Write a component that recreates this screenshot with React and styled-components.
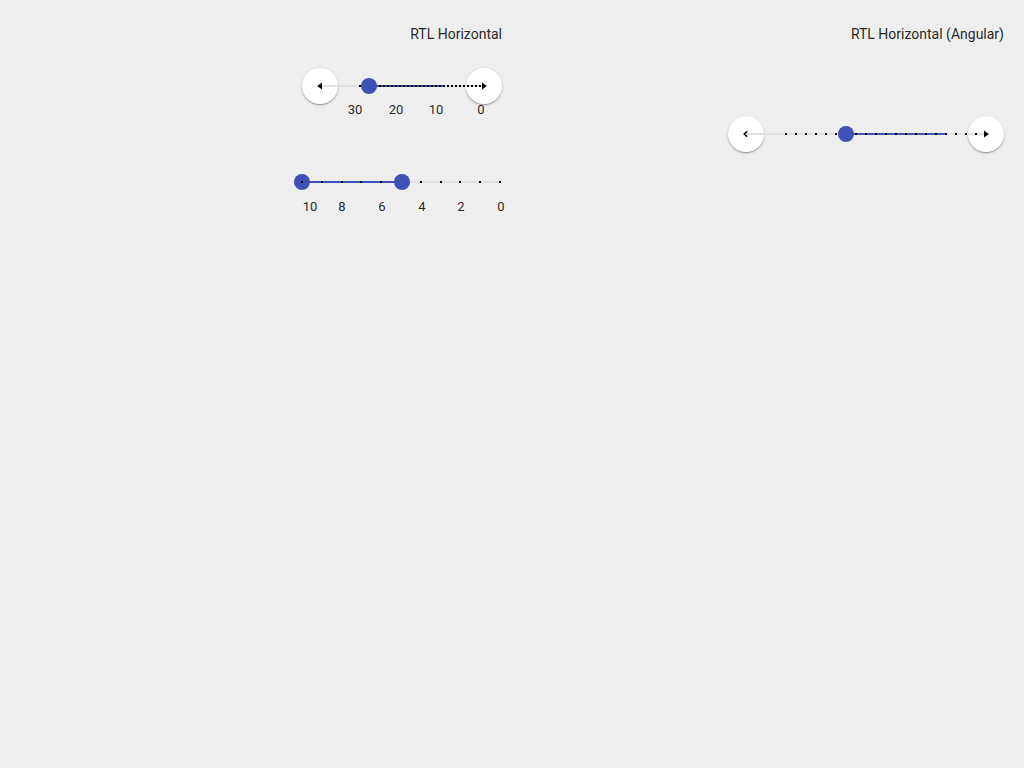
import React from 'react';
import styled, { createGlobalStyle } from 'styled-components';

const GlobalStyle = createGlobalStyle`
  html, body {
    margin: 0;
    padding: 0;
    background-color: #eeeeee;
    font-family: Roboto, "Liberation Sans", sans-serif;
    color: rgba(0, 0, 0, 0.87);
  }
`;

// Page grid with two columns
const Page = styled.div`
  display: grid;
  grid-template-columns: 1fr 1fr;
  column-gap: 20px;
  padding: 24px 20px 0;
  min-height: 768px;
  box-sizing: border-box;
`;

const Column = styled.div`
  display: flex;
  flex-direction: column;
  align-items: flex-end;
`;

const Title = styled.div`
  font-size: 14px;
  line-height: 20px;
`;

const SliderRow = styled.div`
  display: flex;
  align-items: center;
  width: ${props => props.width}px;
  height: 36px;
  margin-top: ${props => props.top || 0}px;
`;

const RoundButton = styled.div`
  flex: none;
  width: 36px;
  height: 36px;
  border-radius: 50%;
  background-color: #ffffff;
  box-shadow: 0 1px 3px rgba(0, 0, 0, 0.2), 0 1px 1px rgba(0, 0, 0, 0.14),
    0 2px 1px -1px rgba(0, 0, 0, 0.12);
  display: flex;
  align-items: center;
  justify-content: center;

  svg {
    position: relative;
    z-index: 4;
  }
`;

// Rail overlaps half of each button so it runs from center to center
const Rail = styled.div`
  position: relative;
  flex: 1;
  height: 36px;
  margin: ${props => (props.bare ? '0' : '0 -18px')};
  z-index: 1;
  pointer-events: none;
`;

const TrackLine = styled.div`
  position: absolute;
  top: 17px;
  height: 2px;
  background-color: ${props => (props.fill ? '#3f51b5' : '#e0e0e0')};
`;

const Dot = styled.div`
  position: absolute;
  top: 17px;
  width: 2px;
  height: 2px;
  margin-left: -1px;
  background-color: #000000;
  z-index: ${props => (props.over ? 3 : 1)};
`;

const Thumb = styled.div`
  position: absolute;
  top: 10px;
  width: 16px;
  height: 16px;
  margin-left: -8px;
  border-radius: 50%;
  background-color: #3f51b5;
  z-index: 2;
`;

const LabelRow = styled.div`
  position: relative;
  width: ${props => props.width}px;
  height: 16px;
  margin-top: ${props => props.top || 0}px;
`;

const Label = styled.span`
  position: absolute;
  top: 0;
  font-size: 13px;
  line-height: 16px;
  transform: translateX(-50%);
  white-space: nowrap;
`;

const ArrowIcon = ({ dir, open }) => (
  <svg width="8" height="8" viewBox="0 0 8 8">
    {open ? (
      <path d="M5.2 1.2 L2.2 4 L5.2 6.8" fill="none" stroke="#000" strokeWidth="1.5" />
    ) : dir === 'left' ? (
      <path d="M1.2 4 L6 0.6 L6 7.4 Z" fill="#000" />
    ) : (
      <path d="M6.8 4 L2 0.6 L2 7.4 Z" fill="#000" />
    )}
  </svg>
);

const range = (n, f) => Array.from({ length: n }, (_, i) => f(i));

const Track = ({ width, ticks, fill, thumbs, bare, dottedThumb }) => (
  <Rail bare={bare}>
    <TrackLine style={{ left: 0, width }} />
    <TrackLine fill style={{ left: fill[0], width: fill[1] - fill[0] }} />
    {ticks.map((x, i) => (
      <Dot key={i} style={{ left: x }} />
    ))}
    {thumbs.map(x => (
      <Thumb key={'t' + x} style={{ left: x }} />
    ))}
    {dottedThumb !== undefined && <Dot over style={{ left: dottedThumb }} />}
  </Rail>
);

const ArrowSlider = ({ width, ticks, fill, thumbs, openLeft, top }) => (
  <SliderRow width={width} top={top}>
    <RoundButton>
      <ArrowIcon dir="left" open={openLeft} />
    </RoundButton>
    <Track width={width - 36} ticks={ticks} fill={fill} thumbs={thumbs} />
    <RoundButton>
      <ArrowIcon dir="right" />
    </RoundButton>
  </SliderRow>
);

// slider 1: values 30..0 from 40px to 160px on the rail
const denseTicks = range(31, i => 40 + i * 4);
const labels1 = [
  { text: '30', x: 53 },
  { text: '20', x: 94 },
  { text: '10', x: 134 },
  { text: '0', x: 179 },
];

// slider 2: values 10..0 every 19.8px
const stepTicks = range(11, i => i * 19.8);
const labels2 = [
  { text: '10', x: 8 },
  { text: '8', x: 40 },
  { text: '6', x: 80 },
  { text: '4', x: 120 },
  { text: '2', x: 159 },
  { text: '0', x: 199 },
];

// angular slider: dots every 10px
const angularTicks = range(20, i => 40 + i * 10);

const App = () => (
  <>
    <GlobalStyle />
    <Page>
      <Column>
        <Title>RTL Horizontal</Title>
        <ArrowSlider width={200} top={24} ticks={denseTicks} fill={[49, 125]} thumbs={[49]} />
        <LabelRow width={200} top={-2}>
          {labels1.map(l => (
            <Label key={l.text} style={{ left: l.x }}>{l.text}</Label>
          ))}
        </LabelRow>
        <SliderRow width={200} top={46}>
          <Track bare width={198} ticks={stepTicks} fill={[0, 100]} thumbs={[0, 100]} dottedThumb={0} />
          <div style={{ width: 2 }} />
        </SliderRow>
        <LabelRow width={200} top={-1}>
          {labels2.map(l => (
            <Label key={l.text} style={{ left: l.x }}>{l.text}</Label>
          ))}
        </LabelRow>
      </Column>
      <Column>
        <Title>RTL Horizontal (Angular)</Title>
        <ArrowSlider width={276} top={72} ticks={angularTicks} fill={[100, 200]} thumbs={[100]} openLeft />
      </Column>
    </Page>
  </>
);

export default App;
